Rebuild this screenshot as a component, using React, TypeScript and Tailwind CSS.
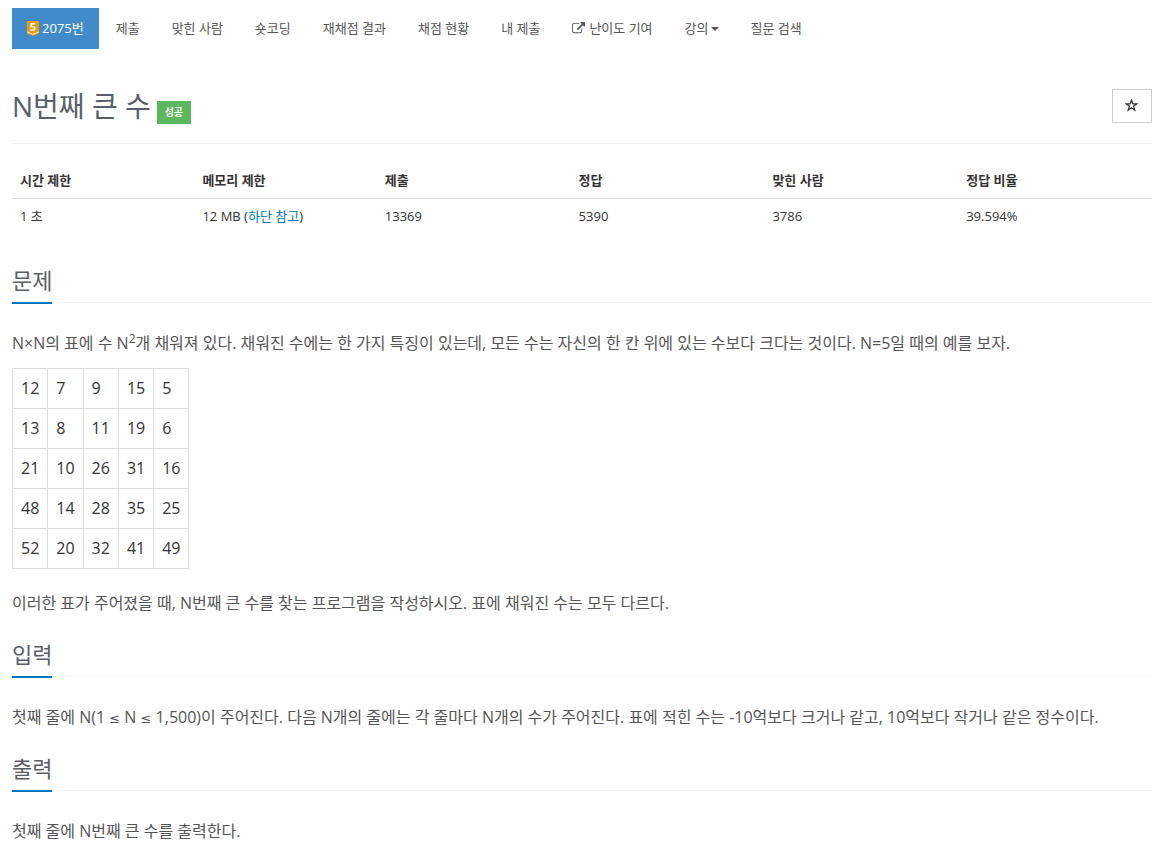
import type { ReactNode } from "react"

const navItems = [
  { title: "제출" },
  { title: "맞힌 사람" },
  { title: "숏코딩" },
  { title: "재채점 결과" },
  { title: "채점 현황" },
  { title: "내 제출" },
  { title: "난이도 기여", external: true },
  { title: "강의", dropdown: true },
  { title: "질문 검색" },
]

const grid = [
  [12, 7, 9, 15, 5],
  [13, 8, 11, 19, 6],
  [21, 10, 26, 31, 16],
  [48, 14, 28, 35, 25],
  [52, 20, 32, 41, 49],
]

function TierIcon() {
  return (
    <svg viewBox="0 0 12 15" className="mr-[3px] h-[15px] w-3 overflow-visible" aria-hidden="true">
      <path d="M0 0h12v12.4L6 15 0 12.4z" fill="#ec9a00" />
      <path d="M0 10.8l6 2.6 6-2.6" fill="none" stroke="#fff" strokeOpacity="0.85" />
      <text x="6" y="9.8" textAnchor="middle" fontSize="11" fontWeight="700" fill="#fff">
        5
      </text>
    </svg>
  )
}

function ExternalLinkIcon() {
  return (
    <svg viewBox="0 0 1792 1792" className="mr-1 h-[13px] w-[13px]" fill="currentColor" aria-hidden="true">
      <path d="M1408 928v320q0 119-84.5 203.5t-203.5 84.5h-832q-119 0-203.5-84.5t-84.5-203.5v-832q0-119 84.5-203.5t203.5-84.5h704q14 0 23 9t9 23v64q0 14-9 23t-23 9h-704q-66 0-113 47t-47 113v832q0 66 47 113t113 47h832q66 0 113-47t47-113v-320q0-14 9-23t23-9h64q14 0 23 9t9 23zm384-864v512q0 26-19 45t-45 19-45-19l-176-176-652 652q-10 10-23 10t-23-10l-114-114q-10-10-10-23t10-23l652-652-176-176q-19-19-19-45t19-45 45-19h512q26 0 45 19t19 45z" />
    </svg>
  )
}

function Leq() {
  return <span className="font-['DejaVu_Sans',sans-serif] text-[13px] leading-none">≤</span>
}

function Section({ title, children }: { title: string; children: ReactNode }) {
  return (
    <section className="mb-[22px]">
      <div className="mb-[27px] flex border-b border-dotted border-[#e4e9f0]">
        <h2 className="-mb-0.5 border-b-2 border-[#0076c0] pb-[5px] text-[22px] leading-[33px] text-[#585f69]">
          {title}
        </h2>
      </div>
      {children}
    </section>
  )
}

export default function App() {
  return (
    <main className="bg-white pt-2 pr-[7px] pl-3 font-['Open_Sans','Noto_Sans_CJK_KR',sans-serif] text-[13px] leading-[21px] text-[#333]">
      <nav>
        <ul className="flex flex-wrap gap-0.5 text-[#555]">
          <li>
            <a href="#" aria-current="page" className="flex items-center bg-[#428bca] px-[15px] py-2.5 text-white">
              <TierIcon />
              2075번
            </a>
          </li>
          {navItems.map((item) => (
            <li key={item.title}>
              <a href="#" className="flex items-center px-[15px] py-2.5">
                {item.external && <ExternalLinkIcon />}
                {item.title}
                {item.dropdown && (
                  <span className="ml-0.5 border-x-4 border-t-4 border-x-transparent border-t-current" />
                )}
              </a>
            </li>
          ))}
        </ul>
      </nav>

      <header className="mt-10 flex items-start justify-between border-b border-[#eee] pb-[19px]">
        <div className="flex items-end gap-1.5">
          <h1 className="text-[28px] leading-[35px] text-[#585f69]">N번째 큰 수</h1>
          <span className="bg-[#5cb85c] px-2 text-[10px] leading-[23px] font-bold text-white">성공</span>
        </div>
        <button
          type="button"
          aria-label="즐겨찾기"
          className="flex h-[34px] w-10 items-center justify-center border border-[#ccc]"
        >
          <svg viewBox="0 0 14 14" className="h-3.5 w-3.5" fill="none" stroke="#333" aria-hidden="true">
            <path d="M6.5 1l1.3 3.8h4L8.6 7.2l1.2 4-3.3-2.4-3.3 2.4 1.2-4-3.2-2.4h4z" strokeWidth="1.2" />
          </svg>
        </button>
      </header>

      <table className="mt-[19px] mb-[30px] w-full table-fixed text-left leading-[19px]">
        <thead>
          <tr className="border-b border-[#ddd]">
            <th className="w-[16%] p-2 font-bold">시간 제한</th>
            <th className="w-[16%] p-2 font-bold">메모리 제한</th>
            <th className="w-[17%] p-2 font-bold">제출</th>
            <th className="w-[17%] p-2 font-bold">정답</th>
            <th className="w-[17%] p-2 font-bold">맞힌 사람</th>
            <th className="w-[17%] p-2 font-bold">정답 비율</th>
          </tr>
        </thead>
        <tbody>
          <tr>
            <td className="p-2">1 초</td>
            <td className="p-2">
              12 MB (<a href="#" className="text-[#0076c0]">하단 참고</a>)
            </td>
            <td className="p-2">13369</td>
            <td className="p-2">5390</td>
            <td className="p-2">3786</td>
            <td className="p-2">39.594%</td>
          </tr>
        </tbody>
      </table>

      <div className="text-base leading-[26px] text-[#555]">
        <Section title="문제">
          <p>
            N×N의 표에 수 N<sup className="text-xs">2</sup>개 채워져 있다. 채워진 수에는 한 가지 특징이 있는데, 모든
            수는 자신의 한 칸 위에 있는 수보다 크다는 것이다. N=5일 때의 예를 보자.
          </p>
          <table className="mt-3 mb-[21px] leading-[23px] text-[#333]">
            <tbody>
              {grid.map((row) => (
                <tr key={row[0]}>
                  {row.map((n) => (
                    <td key={n} className="border border-[#ddd] p-2">
                      {n}
                    </td>
                  ))}
                </tr>
              ))}
            </tbody>
          </table>
          <p>이러한 표가 주어졌을 때, N번째 큰 수를 찾는 프로그램을 작성하시오. 표에 채워진 수는 모두 다르다.</p>
        </Section>

        <Section title="입력">
          <p>
            첫째 줄에 N(1 <Leq /> N <Leq /> 1,500)이 주어진다. 다음 N개의 줄에는 각 줄마다 N개의 수가 주어진다. 표에
            적힌 수는 -10억보다 크거나 같고, 10억보다 작거나 같은 정수이다.
          </p>
        </Section>

        <Section title="출력">
          <p>첫째 줄에 N번째 큰 수를 출력한다.</p>
        </Section>
      </div>
    </main>
  )
}
